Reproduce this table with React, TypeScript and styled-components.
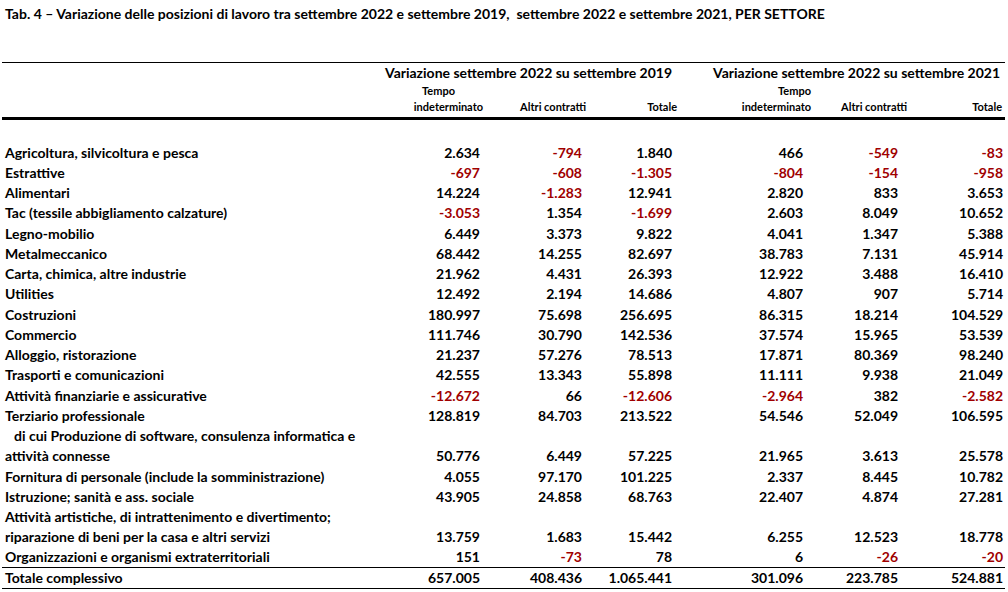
import React from 'react';
import styled, { createGlobalStyle } from 'styled-components';

type Row = {
  label: string;
  values?: number[];
  indent?: boolean;
  total?: boolean;
};

const rows: Row[] = [
  { label: 'Agricoltura, silvicoltura e pesca', values: [2634, -794, 1840, 466, -549, -83] },
  { label: 'Estrattive', values: [-697, -608, -1305, -804, -154, -958] },
  { label: 'Alimentari', values: [14224, -1283, 12941, 2820, 833, 3653] },
  { label: 'Tac (tessile abbigliamento calzature)', values: [-3053, 1354, -1699, 2603, 8049, 10652] },
  { label: 'Legno-mobilio', values: [6449, 3373, 9822, 4041, 1347, 5388] },
  { label: 'Metalmeccanico', values: [68442, 14255, 82697, 38783, 7131, 45914] },
  { label: 'Carta, chimica, altre industrie', values: [21962, 4431, 26393, 12922, 3488, 16410] },
  { label: 'Utilities', values: [12492, 2194, 14686, 4807, 907, 5714] },
  { label: 'Costruzioni', values: [180997, 75698, 256695, 86315, 18214, 104529] },
  { label: 'Commercio', values: [111746, 30790, 142536, 37574, 15965, 53539] },
  { label: 'Alloggio, ristorazione', values: [21237, 57276, 78513, 17871, 80369, 98240] },
  { label: 'Trasporti e comunicazioni', values: [42555, 13343, 55898, 11111, 9938, 21049] },
  { label: 'Attività finanziarie e assicurative', values: [-12672, 66, -12606, -2964, 382, -2582] },
  { label: 'Terziario professionale', values: [128819, 84703, 213522, 54546, 52049, 106595] },
  { label: 'di cui Produzione di software, consulenza informatica e', indent: true },
  { label: 'attività connesse', values: [50776, 6449, 57225, 21965, 3613, 25578] },
  { label: 'Fornitura di personale (include la somministrazione)', values: [4055, 97170, 101225, 2337, 8445, 10782] },
  { label: 'Istruzione; sanità e ass. sociale', values: [43905, 24858, 68763, 22407, 4874, 27281] },
  { label: 'Attività artistiche, di intrattenimento e divertimento;' },
  { label: 'riparazione di beni per la casa e altri servizi', values: [13759, 1683, 15442, 6255, 12523, 18778] },
  { label: 'Organizzazioni e organismi extraterritoriali', values: [151, -73, 78, 6, -26, -20] },
  { label: 'Totale complessivo', values: [657005, 408436, 1065441, 301096, 223785, 524881], total: true },
];

// label + six value columns
const colWidths = [408, 73, 103, 91, 134, 96, 98];
// right padding of the numbers in each value column
const numPads = [3, 4, 5, 8, 9, 2];

const fmt = (n: number) => {
  const s = Math.abs(n)
    .toString()
    .replace(/\B(?=(\d{3})+(?!\d))/g, '.');
  return n < 0 ? '-' + s : s;
};

const GlobalStyle = createGlobalStyle`
  body {
    margin: 0;
    background: #fff;
    color: #000;
    font-family: Lato, "Liberation Sans", sans-serif;
  }
`;

const Page = styled.div`
  width: 1008px;
  height: 592px;
  overflow: hidden;
  font-size: 14px;
  font-weight: 700;
`;

const Title = styled.div`
  padding: 6px 0 0 5px;
  line-height: 16px;
  white-space: nowrap;
`;

const Table = styled.table`
  margin: 40px 0 0 2px;
  border-collapse: collapse;
  table-layout: fixed;
  width: 1003px;
`;

const HeadRow = styled.tr<{ $h: number; $top?: boolean; $bottom?: boolean }>`
  height: ${(p) => p.$h}px;
  border-top: ${(p) => (p.$top ? '1px solid #000' : 'none')};
  border-bottom: ${(p) => (p.$bottom ? '3px solid #000' : 'none')};
`;

const HeadCell = styled.th<{ $pad?: number; $group?: boolean }>`
  padding: 0 ${(p) => p.$pad ?? 0}px 0 0;
  text-align: right;
  font-weight: inherit;
  font-size: ${(p) => (p.$group ? 14 : 11)}px;
  white-space: nowrap;
  overflow: visible;
  line-height: 14px;
  vertical-align: middle;
`;

// group titles are wider than their three columns and spill to the left
const GroupTitle = styled.div`
  display: flex;
  justify-content: flex-end;
  white-space: nowrap;
`;

const Spacer = styled.tr`
  height: 24px;
`;

const DataRow = styled.tr<{ $total?: boolean }>`
  height: ${(p) => (p.$total ? 21 : 20.25)}px;
  border-top: ${(p) => (p.$total ? '1px solid #000' : 'none')};
  border-bottom: ${(p) => (p.$total ? '1px solid #000' : 'none')};
`;

const Label = styled.td<{ $indent?: boolean }>`
  padding: 0 0 0 ${(p) => (p.$indent ? 12 : 3)}px;
  white-space: nowrap;
  line-height: 14px;
`;

const Num = styled.td<{ $neg?: boolean; $pad: number }>`
  padding: 0 ${(p) => p.$pad}px 0 0;
  text-align: right;
  white-space: nowrap;
  line-height: 14px;
  color: ${(p) => (p.$neg ? '#a00000' : '#000')};
`;

export default function App() {
  return (
    <Page>
      <GlobalStyle />
      <Title>
        Tab. 4 – Variazione delle posizioni di lavoro tra settembre 2022 e settembre 2019,&nbsp; settembre 2022 e
        settembre 2021, PER SETTORE
      </Title>
      <Table>
        <colgroup>
          {colWidths.map((w, i) => (
            <col key={i} style={{ width: w }} />
          ))}
        </colgroup>
        <thead>
          <HeadRow $h={21} $top>
            <HeadCell />
            <HeadCell colSpan={3} $group $pad={5}>
              <GroupTitle>Variazione settembre 2022 su settembre 2019</GroupTitle>
            </HeadCell>
            <HeadCell colSpan={3} $group $pad={5}>
              <GroupTitle>Variazione settembre 2022 su settembre 2021</GroupTitle>
            </HeadCell>
          </HeadRow>
          <HeadRow $h={13}>
            <HeadCell />
            <HeadCell $pad={28}>Tempo</HeadCell>
            <HeadCell />
            <HeadCell />
            <HeadCell>Tempo</HeadCell>
            <HeadCell />
            <HeadCell />
          </HeadRow>
          <HeadRow $h={21} $bottom>
            <HeadCell />
            <HeadCell>indeterminato</HeadCell>
            <HeadCell>Altri contratti</HeadCell>
            <HeadCell>Totale</HeadCell>
            <HeadCell>indeterminato</HeadCell>
            <HeadCell>Altri contratti</HeadCell>
            <HeadCell $pad={3}>Totale</HeadCell>
          </HeadRow>
        </thead>
        <tbody>
          <Spacer>
            <td colSpan={7} />
          </Spacer>
          {rows.map((r) => (
            <DataRow key={r.label} $total={r.total}>
              <Label $indent={r.indent}>{r.label}</Label>
              {(r.values ?? [null, null, null, null, null, null]).map((v, i) => (
                <Num key={i} $pad={numPads[i]} $neg={v !== null && v < 0}>
                  {v === null ? '' : fmt(v)}
                </Num>
              ))}
            </DataRow>
          ))}
        </tbody>
      </Table>
    </Page>
  );
}
